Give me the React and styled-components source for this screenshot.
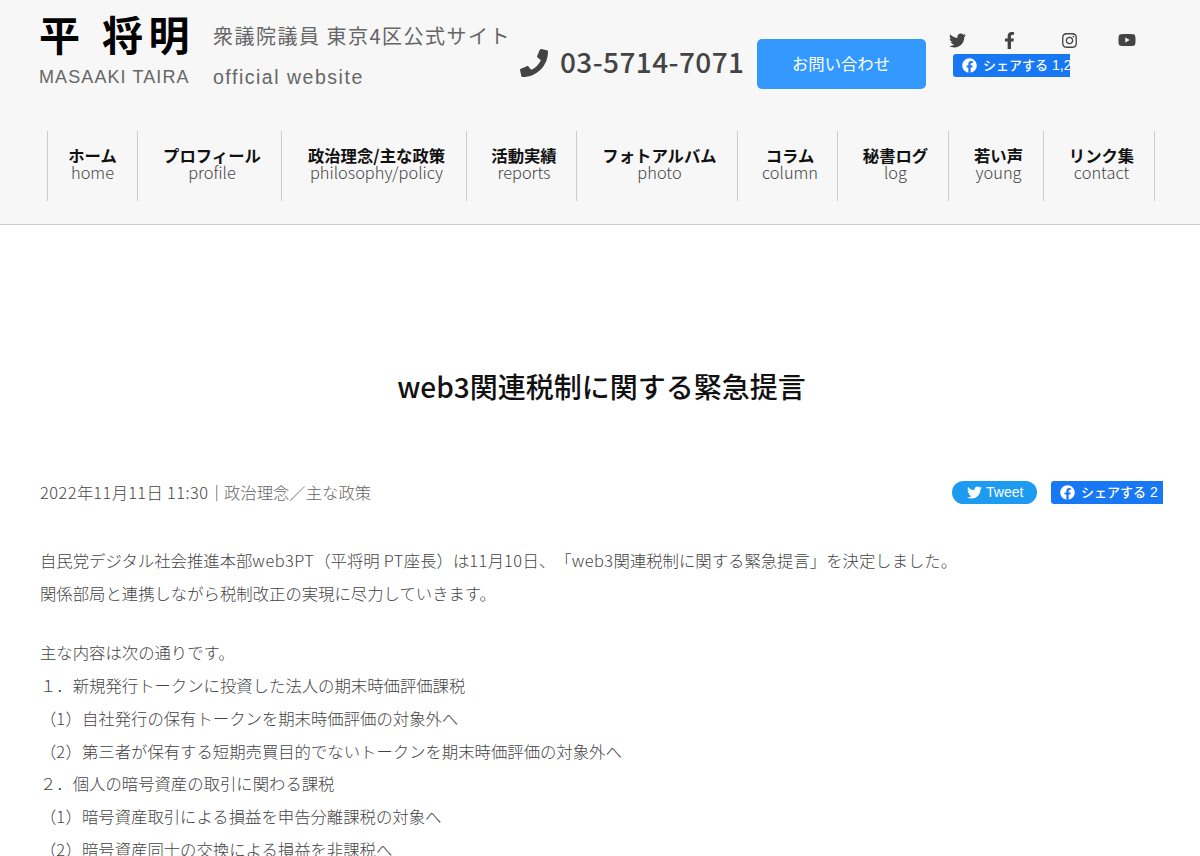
import React from 'react';
import styled, { createGlobalStyle } from 'styled-components';
import {
  FaFacebook,
  FaFacebookF,
  FaInstagram,
  FaPhone,
  FaTwitter,
  FaYoutube,
} from 'react-icons/fa';

const GlobalStyle = createGlobalStyle`
  * {
    box-sizing: border-box;
  }

  body {
    margin: 0;
    height: 856px;
    overflow: hidden;
    background: #fff;
    color: #444;
    font-family: 'Noto Sans CJK JP', sans-serif;
    font-size: 16.36px;
    font-weight: 300;
    text-spacing-trim: space-all;
  }
`;

const Header = styled.header`
  height: 225px;
  background: #f7f7f7;
  border-bottom: 1px solid #ccc;
`;

const HeaderTop = styled.div`
  display: flex;
  align-items: flex-start;
  height: 131px;
  padding-left: 39px;
`;

const Logo = styled.div`
  width: 174px;
  padding-top: 8px;
`;

const LogoName = styled.div`
  color: #000;
  font-size: 41px;
  font-weight: 700;
  line-height: 50px;
  letter-spacing: 5.4px;
  word-spacing: 2px;
  white-space: nowrap;
`;

const LogoRoman = styled.div`
  margin-top: 7px;
  color: #666;
  font-family: 'Liberation Sans', sans-serif;
  font-size: 18px;
  font-weight: 400;
  line-height: 25px;
  letter-spacing: 1.1px;
  white-space: nowrap;
`;

const SiteName = styled.div`
  width: 307px;
  padding-top: 22px;
  color: #666;
  font-size: 20px;
  font-weight: 400;
  line-height: 28px;
  letter-spacing: 1.5px;
  white-space: nowrap;
`;

const SiteNameEn = styled.div`
  margin-top: 13px;
  font-family: 'Liberation Sans', sans-serif;
  font-size: 19.5px;
  letter-spacing: 1.52px;
`;

const Phone = styled.div`
  display: flex;
  align-items: center;
  gap: 12px;
  width: 237px;
  padding-top: 43px;
  color: #444;
  font-size: 28px;
  font-weight: 500;
  line-height: 42px;
  letter-spacing: 0.4px;
  white-space: nowrap;
`;

const PhoneNumber = styled.span`
  margin-top: -3px;
`;

const ContactButton = styled.button`
  width: 169px;
  height: 50px;
  margin-top: 39px;
  padding: 0 1px 2px 0;
  border: 0;
  border-radius: 5px;
  background: #3399ff;
  color: #fff;
  font: inherit;
  font-weight: 400;
`;

const Social = styled.div`
  width: 188px;
  margin: 31px 0 0 23px;
`;

const SocialIcons = styled.div`
  display: grid;
  grid-template-columns: 52px 60px 57px 18px;
  align-items: center;
  height: 18px;
  color: #444;
`;

const ShareButton = styled.div`
  display: flex;
  align-items: center;
  width: ${props => props.width}px;
  height: 23px;
  padding-left: 9px;
  overflow: hidden;
  border-radius: 3px 0 0 3px;
  background: #1877f2;
  color: #fff;
  font-size: 13px;
  font-weight: 500;
  line-height: 21px;
  white-space: nowrap;

  svg {
    flex: none;
    margin-right: 6px;
  }
`;

const ShareLabel = styled.span`
  height: 23px;
`;

const ShareCount = styled.span`
  margin-left: 4px;
  font-family: 'Liberation Sans', sans-serif;
  font-size: 14px;
  font-weight: 400;
`;

const HeaderShare = styled.div`
  margin: 5px 0 0 4px;
`;

const Nav = styled.nav`
  display: flex;
  height: 70px;
  margin-left: 47px;
`;

const NavItem = styled.a`
  width: ${props => props.width}px;
  padding: 16px 0 0 ${props => (props.first ? 0 : 5)}px;
  border-left: 1px solid #ccc;
  color: #444;
  font-size: 16.36px;
  line-height: 17px;
  text-align: center;
  white-space: nowrap;

  &:last-child {
    border-right: 1px solid #ccc;
  }
`;

const NavLabel = styled.div`
  color: #111;
  font-weight: 700;
`;

const Main = styled.main`
  padding: 141px 37px 0 40px;
`;

const Title = styled.h1`
  margin: 0;
  color: #111;
  font-size: 28px;
  font-weight: 500;
  line-height: 40px;
  text-align: center;
`;

const Meta = styled.div`
  display: flex;
  align-items: center;
  height: 24px;
  margin-top: 74px;
`;

const MetaText = styled.div`
  flex: 1;
  color: #444;
`;

const Category = styled.span`
  margin-left: -1px;
  color: #666;
`;

const Latin = styled.span`
  letter-spacing: 0.48px;
`;

const TweetButton = styled.div`
  display: flex;
  align-items: center;
  gap: 4px;
  width: 85px;
  height: 23px;
  margin-right: 14px;
  padding-left: 15px;
  border-radius: 12px;
  background: #1d9bf0;
  color: #fff;
  font-family: 'Liberation Sans', sans-serif;
  font-size: 14px;
  font-weight: 400;
`;

const Article = styled.div`
  margin-top: 40.4px;
  line-height: 32.73px;
`;

const Paragraph = styled.div`
  margin: 0 0 26.5px;
  white-space: nowrap;
`;

const navItems = [
  { label: 'ホーム', en: 'home', width: 90 },
  { label: 'プロフィール', en: 'profile', width: 144 },
  { label: '政治理念/主な政策', en: 'philosophy/policy', width: 185 },
  { label: '活動実績', en: 'reports', width: 110 },
  { label: 'フォトアルバム', en: 'photo', width: 161 },
  { label: 'コラム', en: 'column', width: 100 },
  { label: '秘書ログ', en: 'log', width: 111 },
  { label: '若い声', en: 'young', width: 95 },
  { label: 'リンク集', en: 'contact', width: 112 },
];

const paragraphs = [
  [
    '自民党デジタル社会推進本部web3PT（平将明 PT座長）は11月10日、「web3関連税制に関する緊急提言」を決定しました。',
    '関係部局と連携しながら税制改正の実現に尽力していきます。',
  ],
  [
    '主な内容は次の通りです。',
    '１．新規発行トークンに投資した法人の期末時価評価課税',
    '（1）自社発行の保有トークンを期末時価評価の対象外へ',
    '（2）第三者が保有する短期売買目的でないトークンを期末時価評価の対象外へ',
    '２．個人の暗号資産の取引に関わる課税',
    '（1）暗号資産取引による損益を申告分離課税の対象へ',
    '（2）暗号資産同士の交換による損益を非課税へ',
  ],
];

// letters and digits are set a little wider than the kana around them
const spaced = text =>
  text
    .split(/([A-Za-z0-9: ]+)/)
    .map((part, i) => (i % 2 ? <Latin key={i}>{part}</Latin> : part));

const Share = ({ count, width }) => (
  <ShareButton width={width}>
    <FaFacebook size={15} />
    <ShareLabel>シェアする</ShareLabel>
    <ShareCount>{count}</ShareCount>
  </ShareButton>
);

export default function App() {
  return (
    <>
      <GlobalStyle />
      <Header>
        <HeaderTop>
          <Logo>
            <LogoName>平 将明</LogoName>
            <LogoRoman>MASAAKI TAIRA</LogoRoman>
          </Logo>
          <SiteName>
            衆議院議員 東京4区公式サイト
            <SiteNameEn>official website</SiteNameEn>
          </SiteName>
          <Phone>
            <FaPhone size={28} />
            <PhoneNumber>03-5714-7071</PhoneNumber>
          </Phone>
          <ContactButton>お問い合わせ</ContactButton>
          <Social>
            <SocialIcons>
              <FaTwitter size={17} />
              <FaFacebookF size={17} />
              <FaInstagram size={17} />
              <FaYoutube size={18} />
            </SocialIcons>
            <HeaderShare>
              <Share count="1,2" width={117} />
            </HeaderShare>
          </Social>
        </HeaderTop>
        <Nav>
          {navItems.map(({ label, en, width }, i) => (
            <NavItem key={en} width={width} first={i === 0 ? 1 : 0}>
              <NavLabel>{label}</NavLabel>
              {en}
            </NavItem>
          ))}
        </Nav>
      </Header>

      <Main>
        <Title>web3関連税制に関する緊急提言</Title>
        <Meta>
          <MetaText>
            {spaced('2022年11月11日 11:30｜')}
            <Category>政治理念／主な政策</Category>
          </MetaText>
          <TweetButton>
            <FaTwitter size={15} />
            Tweet
          </TweetButton>
          <Share count="2" width={112} />
        </Meta>
        <Article>
          {paragraphs.map((lines, i) => (
            <Paragraph key={i}>
              {lines.map(line => (
                <div key={line}>{spaced(line)}</div>
              ))}
            </Paragraph>
          ))}
        </Article>
      </Main>
    </>
  );
}
